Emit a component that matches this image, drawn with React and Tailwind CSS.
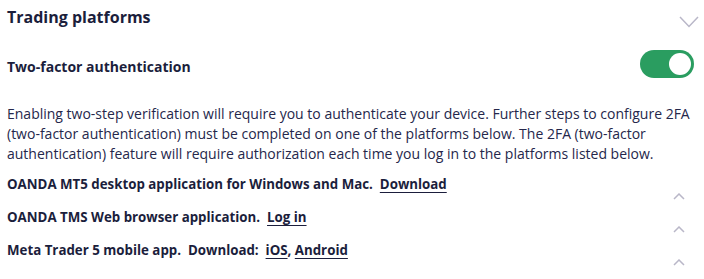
import { useState } from 'react';

const ChevronDown = () => (
    <svg width="20" height="12" viewBox="0 0 20 12" fill="none" className="text-[#b9b7c8]">
        <polyline points="1,1 10,10.5 19,1" stroke="currentColor" strokeWidth="1.5" />
    </svg>
);

const ChevronUp = () => (
    <svg width="12" height="7" viewBox="0 0 12 7" fill="none" className="text-[#b9b7c8]">
        <polyline points="1,6 6,1 11,6" stroke="currentColor" strokeWidth="1.5" />
    </svg>
);

const rows = [
    {
        label: 'OANDA MT5 desktop application for Windows and Mac.',
        links: [{ text: 'Download' }],
    },
    {
        label: 'OANDA TMS Web browser application.',
        links: [{ text: 'Log in' }],
    },
    {
        label: 'Meta Trader 5 mobile app.  Download:',
        links: [{ text: 'iOS' }, { text: 'Android' }],
    },
];

export default function App() {
    const [enabled, setEnabled] = useState(true);

    return (
        <div className="w-[704px] h-[279px] overflow-hidden bg-white px-[7px] text-[#23254a] font-['Open_Sans']">
            <div className="flex items-start justify-between pt-[5px]">
                <h2 className="text-[16px] leading-[24px] font-bold text-[#1b1e3c]">Trading platforms</h2>
                <div className="pt-[11px] -mr-[2px]">
                    <ChevronDown />
                </div>
            </div>

            <div className="flex items-start justify-between mt-[21px]">
                <h3 className="mt-[7px] text-[14px] leading-[20px] font-bold text-[#1b1e3c]">Two-factor authentication</h3>
                <button
                    onClick={() => setEnabled(!enabled)}
                    className="relative w-[54px] h-[28px] rounded-full bg-[#2a9d60] mr-[3px]"
                >
                    <span className="absolute right-[3px] top-[3px] w-[22px] h-[22px] rounded-full bg-white" />
                </button>
            </div>

            <p className="mt-[26px] text-[14px] leading-[20px] text-[#25274b]">
                Enabling two-step verification will require you to authenticate your device. Further steps to configure 2FA
                (two-factor authentication) must be completed on one of the platforms below. The 2FA (two-factor
                authentication) feature will require authorization each time you log in to the platforms listed below.
            </p>

            <div className="mt-[10px] flex flex-col">
                {rows.map((row, i) => (
                    <div key={i} className="flex items-start justify-between h-[33px]">
                        <p className="text-[13.3px] leading-[20px] font-bold text-[#1b1e3c] whitespace-pre">
                            {row.label}{'  '}
                            {row.links.map((l, j) => (
                                <span key={j}>
                                    {j > 0 && ', '}
                                    <a href="#" className="underline underline-offset-[3px]">{l.text}</a>
                                </span>
                            ))}
                        </p>
                        <div className="pt-[19px] pr-[12px]">
                            <ChevronUp />
                        </div>
                    </div>
                ))}
            </div>
        </div>
    );
}
